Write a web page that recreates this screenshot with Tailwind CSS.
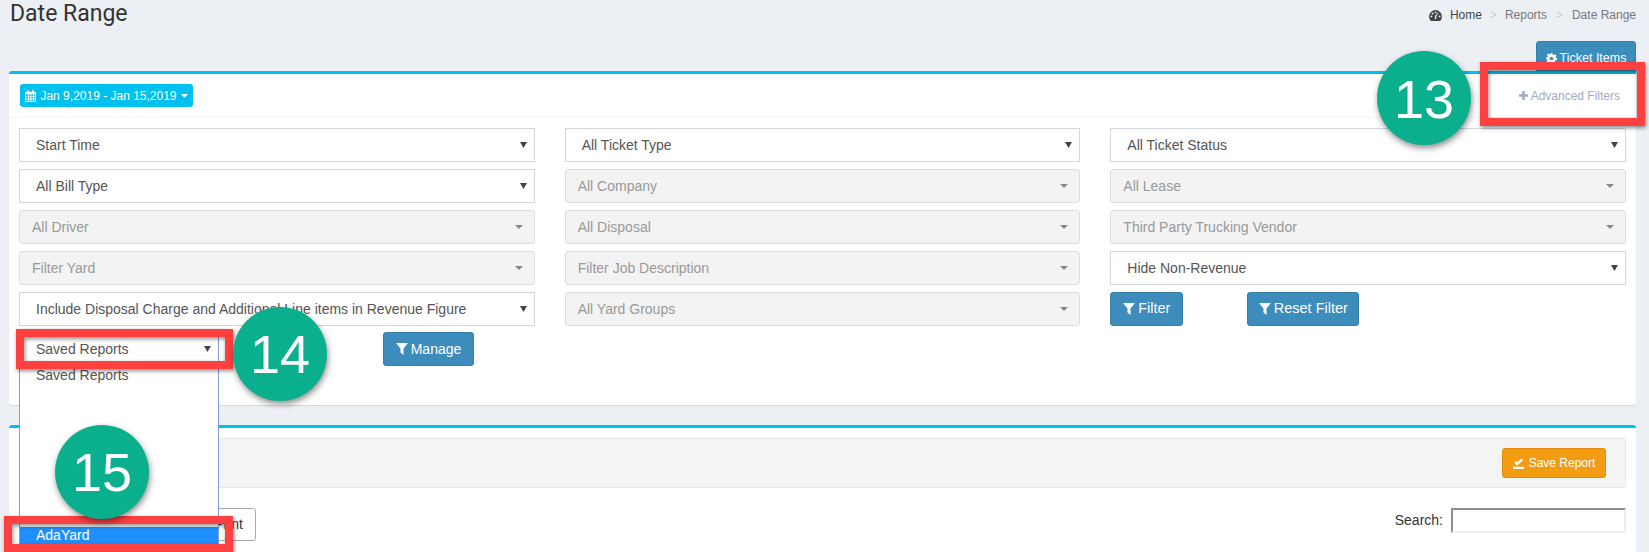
<!DOCTYPE html>
<html lang="en">
<head>
    <meta charset="UTF-8">
    <title>Date Range</title>
    <script src="https://cdn.jsdelivr.net/npm/@tailwindcss/browser@4"></script>
</head>
<body class="bg-[#ecf0f5] font-['Liberation_Sans',Arial,sans-serif] text-[14px] text-[#555]">
<div class="relative h-[552px] overflow-hidden pl-[9px] pr-[13px]">

    <!-- page header -->
    <div class="flex h-[41px] justify-between">
        <h1 class="h-[27px] pl-[1px] font-['Roboto',sans-serif] text-[23px] leading-[27px] text-[#333]">Date Range</h1>
        <div class="flex h-[30px] items-center text-[12px] text-[#777]">
            <svg class="mr-[8px] h-[11px] w-[13px]" viewBox="0 0 14 12"><path fill="#444" d="M7 0a7 7 0 0 0-7 7c0 1.800.6 3.500 1.700 4.800l.3.200h10l.3-.2A7 7 0 0 0 14 7a7 7 0 0 0-7-7zm-4.500 8a1 1 0 1 1 0-2 1 1 0 0 1 0 2zm1.300-3.200a1 1 0 1 1 0-2 1 1 0 0 1 0 2zM7 3.500a1 1 0 1 1 0-2 1 1 0 0 1 0 2zm.8 6.300H6.200L6.700 6 9.800 2.800l.5.300L8 6.500zm3.700-1.800a1 1 0 1 1 0-2 1 1 0 0 1 0 2z"/></svg>
            <span class="text-[#444]">Home</span>
            <span class="mx-[8px] text-[#ccc]">&gt;</span>
            <span>Reports</span>
            <span class="mx-[9px] text-[#ccc]">&gt;</span>
            <span>Date Range</span>
        </div>
    </div>
    <div class="flex h-[30px] justify-end">
        <button class="flex h-[34px] w-[100px] items-center justify-center gap-[3px] rounded-[3px] border border-[#367fa9] bg-[#3c8dbc] text-[12.5px] text-white">
            <svg class="h-[11px] w-[11px]" viewBox="0 0 24 24"><path fill="#fff" fill-rule="evenodd" d="M10 0h4l.7 3.400 2.300 1 3-1.900 2.800 2.800-1.900 3 1 2.300L24 11v4l-3.400.7-1 2.300 1.900 3-2.800 2.800-3-1.900-2.300 1L13 24h-3l-.7-3.400-2.300-1-3 1.900L1.200 18.700l1.900-3-1-2.300L0 13V10l3.400-.7 1-2.300-1.900-3L5.300 1.200l3 1.900 2.300-1zM12 8a4 4 0 1 0 0 8 4 4 0 0 0 0-8z"/></svg>
            Ticket Items
        </button>
    </div>

    <!-- filter card -->
    <div class="relative h-[334px] rounded-[3px] border-t-[3px] border-[#00c0ef] bg-white shadow-[0_1px_1px_rgba(0,0,0,0.1)]">
        <div class="flex h-[44px] items-center justify-between border-b border-[#f4f4f4] pl-[11px] pr-[16px]">
            <button class="flex h-[23px] w-[173px] items-center justify-center gap-[4px] rounded-[3px] bg-[#00c0ef] text-[12px] text-white">
                <svg class="h-[12px] w-[11px]" viewBox="0 0 13 14"><path fill="#fff" fill-rule="evenodd" d="M3 0h1.500v2H8.500V0H10v2h2a1 1 0 0 1 1 1v10a1 1 0 0 1-1 1H1a1 1 0 0 1-1-1V3a1 1 0 0 1 1-1h2zM1 5v2h2.500V5zm3.500 0v2h2V5zm3 0v2h2V5zm3 0v2H12V5zM1 8v2h2.500V8zm3.500 0v2h2V8zm3 0v2h2V8zm3 0v2H12V8zM1 11v2h2.500v-2zm3.500 0v2h2v-2zm3 0v2h2v-2zm3 0v2H12v-2z"/></svg>
                Jan 9,2019 - Jan 15,2019
                <svg class="h-[4px] w-[7px]" viewBox="0 0 7 4"><path fill="#fff" d="M0 0h7L3.500 4z"/></svg>
            </button>
            <a class="flex items-center gap-[3px] text-[12px] text-[#a3a9c0]">
                <svg class="h-[9px] w-[9px]" viewBox="0 0 9 9"><path fill="#a3a9c0" d="M3.200 0h2.600v3.200H9v2.600H5.800V9H3.200V5.800H0V3.200h3.200z"/></svg>
                Advanced Filters
            </a>
        </div>

        <div class="px-[10px] pt-[10px]">
            <div class="grid grid-cols-3 gap-x-[30px] gap-y-[7px]">
                <div class="flex h-[34px] items-center justify-between border border-[#d2d6de] pl-[16px] pr-[7px]"><span>Start Time</span><svg class="h-[6px] w-[7px]" viewBox="0 0 7 6"><path fill="#444" d="M0 0h7L3.500 6z"/></svg></div>
                <div class="flex h-[34px] items-center justify-between border border-[#d2d6de] pl-[16px] pr-[7px]"><span>All Ticket Type</span><svg class="h-[6px] w-[7px]" viewBox="0 0 7 6"><path fill="#444" d="M0 0h7L3.500 6z"/></svg></div>
                <div class="flex h-[34px] items-center justify-between border border-[#d2d6de] pl-[16px] pr-[7px]"><span>All Ticket Status</span><svg class="h-[6px] w-[7px]" viewBox="0 0 7 6"><path fill="#444" d="M0 0h7L3.500 6z"/></svg></div>

                <div class="flex h-[34px] items-center justify-between border border-[#d2d6de] pl-[16px] pr-[7px]"><span>All Bill Type</span><svg class="h-[6px] w-[7px]" viewBox="0 0 7 6"><path fill="#444" d="M0 0h7L3.500 6z"/></svg></div>
                <div class="flex h-[34px] items-center justify-between rounded-[3px] border border-[#ddd] bg-[#f3f3f3] pl-[12px] pr-[11px] text-[#999]"><span>All Company</span><svg class="h-[4px] w-[8px]" viewBox="0 0 8 4"><path fill="#888" d="M0 0h8L4 4z"/></svg></div>
                <div class="flex h-[34px] items-center justify-between rounded-[3px] border border-[#ddd] bg-[#f3f3f3] pl-[12px] pr-[11px] text-[#999]"><span>All Lease</span><svg class="h-[4px] w-[8px]" viewBox="0 0 8 4"><path fill="#888" d="M0 0h8L4 4z"/></svg></div>

                <div class="flex h-[34px] items-center justify-between rounded-[3px] border border-[#ddd] bg-[#f3f3f3] pl-[12px] pr-[11px] text-[#999]"><span>All Driver</span><svg class="h-[4px] w-[8px]" viewBox="0 0 8 4"><path fill="#888" d="M0 0h8L4 4z"/></svg></div>
                <div class="flex h-[34px] items-center justify-between rounded-[3px] border border-[#ddd] bg-[#f3f3f3] pl-[12px] pr-[11px] text-[#999]"><span>All Disposal</span><svg class="h-[4px] w-[8px]" viewBox="0 0 8 4"><path fill="#888" d="M0 0h8L4 4z"/></svg></div>
                <div class="flex h-[34px] items-center justify-between rounded-[3px] border border-[#ddd] bg-[#f3f3f3] pl-[12px] pr-[11px] text-[#999]"><span>Third Party Trucking Vendor</span><svg class="h-[4px] w-[8px]" viewBox="0 0 8 4"><path fill="#888" d="M0 0h8L4 4z"/></svg></div>

                <div class="flex h-[34px] items-center justify-between rounded-[3px] border border-[#ddd] bg-[#f3f3f3] pl-[12px] pr-[11px] text-[#999]"><span>Filter Yard</span><svg class="h-[4px] w-[8px]" viewBox="0 0 8 4"><path fill="#888" d="M0 0h8L4 4z"/></svg></div>
                <div class="flex h-[34px] items-center justify-between rounded-[3px] border border-[#ddd] bg-[#f3f3f3] pl-[12px] pr-[11px] text-[#999]"><span>Filter Job Description</span><svg class="h-[4px] w-[8px]" viewBox="0 0 8 4"><path fill="#888" d="M0 0h8L4 4z"/></svg></div>
                <div class="flex h-[34px] items-center justify-between border border-[#d2d6de] pl-[16px] pr-[7px]"><span>Hide Non-Revenue</span><svg class="h-[6px] w-[7px]" viewBox="0 0 7 6"><path fill="#444" d="M0 0h7L3.500 6z"/></svg></div>

                <div class="flex h-[34px] items-center justify-between border border-[#d2d6de] pl-[16px] pr-[7px]"><span>Include Disposal Charge and Additional Line items in Revenue Figure</span><svg class="h-[6px] w-[7px]" viewBox="0 0 7 6"><path fill="#444" d="M0 0h7L3.500 6z"/></svg></div>
                <div class="flex h-[34px] items-center justify-between rounded-[3px] border border-[#ddd] bg-[#f3f3f3] pl-[12px] pr-[11px] text-[#999]"><span>All Yard Groups</span><svg class="h-[4px] w-[8px]" viewBox="0 0 8 4"><path fill="#888" d="M0 0h8L4 4z"/></svg></div>
                <div class="flex gap-[64px]">
                    <button class="flex h-[34px] w-[73px] items-center justify-center gap-[3px] rounded-[3px] border border-[#367fa9] bg-[#3c8dbc] text-[14.5px] text-white">
                        <svg class="h-[12px] w-[12px]" viewBox="0 0 12 12"><path fill="#fff" d="M0 0h12L7.500 5.500V12L4.500 9.500V5.500z"/></svg>
                        Filter
                    </button>
                    <button class="flex h-[34px] w-[112px] items-center justify-center gap-[3px] rounded-[3px] border border-[#367fa9] bg-[#3c8dbc] text-[14.5px] text-white">
                        <svg class="h-[12px] w-[12px]" viewBox="0 0 12 12"><path fill="#fff" d="M0 0h12L7.500 5.500V12L4.500 9.500V5.500z"/></svg>
                        Reset Filter
                    </button>
                </div>
            </div>

            <div class="mt-[6px] flex">
                <div class="flex h-[34px] w-[200px] items-center justify-between border-x border-[#7f9ddb] pl-[16px] pr-[7px]"><span>Saved Reports</span><svg class="h-[6px] w-[7px]" viewBox="0 0 7 6"><path fill="#444" d="M0 0h7L3.500 6z"/></svg></div>
                <button class="ml-[164px] flex h-[34px] w-[91px] items-center justify-center gap-[3px] rounded-[3px] border border-[#367fa9] bg-[#3c8dbc] text-white">
                    <svg class="h-[12px] w-[12px]" viewBox="0 0 12 12"><path fill="#fff" d="M0 0h12L7.500 5.500V12L4.500 9.500V5.500z"/></svg>
                    Manage
                </button>
            </div>
        </div>
    </div>

    <!-- report card -->
    <div class="mt-[20px] h-[200px] rounded-t-[3px] border-t-[3px] border-[#00c0ef] bg-white px-[10px] pt-[10px]">
        <div class="flex h-[50px] items-center justify-end rounded-[3px] border border-[#e7e7e7] bg-[#f4f4f4] pr-[19px]">
            <button class="flex h-[30px] w-[104px] items-center justify-center gap-[5px] rounded-[3px] border border-[#e08e0b] bg-[#f39c12] text-[12px] text-white">
                <svg class="h-[11px] w-[11px]" viewBox="0 0 12 12"><path fill="#fff" d="M0 9.500h12V12H0zM1.500 4.500l2-1.200L4.500 5 9.500 .5 11 2.500 4.200 8.500z"/></svg>
                Save Report
            </button>
        </div>
        <div class="mt-[20px] flex items-start justify-between">
            <button class="ml-[160px] h-[33px] w-[77px] rounded-[3px] border border-[#aaa] bg-white pr-[12px] text-right text-[#333]">Print</button>
            <label class="flex items-center gap-[8px] text-[#333]">
                Search:
                <span class="h-[25px] w-[175px] border-2 border-t-[#8f8f8f] border-l-[#8f8f8f] border-r-[#eee] border-b-[#eee] bg-white"></span>
            </label>
        </div>
    </div>

    <!-- open saved reports list -->
    <div class="absolute left-[19px] top-[366px] h-[186px] w-[200px] border-x border-[#7f9ddb] bg-white">
        <div class="h-[18px] pl-[16px] leading-[18px]">Saved Reports</div>
        <div class="absolute inset-x-0 top-[161px] h-[17px] bg-[#1e90ff] pl-[16px] leading-[17px] text-white">AdaYard</div>
    </div>

    <!-- tutorial callouts -->
    <div class="absolute left-[1480px] top-[62px] h-[64px] w-[165px] border-[8px] border-[#ff4040] shadow-[1px_2px_4px_rgba(0,0,0,0.45),inset_1px_2px_4px_rgba(0,0,0,0.45)]"></div>
    <div class="absolute left-[16px] top-[329px] h-[40px] w-[217px] border-[8px] border-[#ff4040] shadow-[1px_2px_4px_rgba(0,0,0,0.45),inset_1px_2px_4px_rgba(0,0,0,0.45)]"></div>
    <div class="absolute left-[4px] top-[516px] h-[36px] w-[229px] border-[8px] border-[#ff4040] shadow-[1px_2px_4px_rgba(0,0,0,0.45),inset_1px_2px_4px_rgba(0,0,0,0.45)]"></div>

    <div class="absolute left-[1377px] top-[51px] flex h-[94px] w-[94px] items-center justify-center rounded-full bg-[#0aaf8e] pt-[2px] text-[54px] text-white shadow-[1px_3px_6px_rgba(0,0,0,0.45)]">13</div>
    <div class="absolute left-[233px] top-[307px] flex h-[94px] w-[94px] items-center justify-center rounded-full bg-[#0aaf8e] text-[54px] text-white shadow-[1px_3px_6px_rgba(0,0,0,0.45)]">14</div>
    <div class="absolute left-[55px] top-[425px] flex h-[94px] w-[94px] items-center justify-center rounded-full bg-[#0aaf8e] text-[54px] text-white shadow-[1px_3px_6px_rgba(0,0,0,0.45)]">15</div>
</div>
</body>
</html>
